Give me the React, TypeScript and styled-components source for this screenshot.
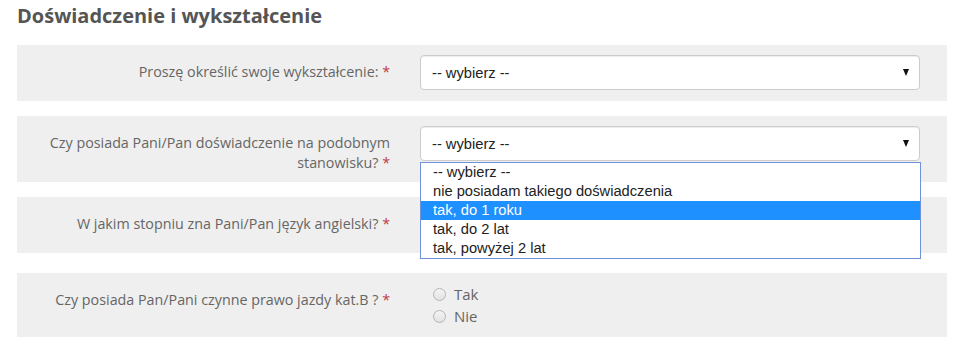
import React from "react";
import styled, { createGlobalStyle } from "styled-components";

const Global = createGlobalStyle`
  html, body { margin: 0; padding: 0; background: #fff; }
  body { font-family: "Open Sans", sans-serif; }
`;

const Page = styled.div`
  padding: 0 19px 0 17px;
  width: 930px;
`;

const Title = styled.h3`
  margin: 0;
  padding: 3px 0 0 0;
  height: 42px;
  font-family: "Open Sans", sans-serif;
  font-weight: 700;
  font-size: 20px;
  line-height: 26px;
  color: #555;
`;

const Row = styled.div<{ $h: number; $mb: number }>`
  display: grid;
  grid-template-columns: 388px 500px;
  column-gap: 15px;
  align-items: start;
  background: #efefef;
  height: ${(p) => p.$h}px;
  margin-bottom: ${(p) => p.$mb}px;
  box-sizing: border-box;
  padding-right: 27px;
`;

const Label = styled.label`
  text-align: right;
  padding-right: 15px;
  padding-top: 17px;
  font-size: 14.3px;
  line-height: 20px;
  color: #666;
`;

const Req = styled.span`
  color: #c0394b;
`;

const SelectBox = styled.div`
  position: relative;
  margin-top: 10px;
  height: 35px;
  box-sizing: border-box;
  border: 1px solid #ccc;
  border-radius: 4px;
  background: #fff;
  box-shadow: inset 0 1px 1px rgba(0, 0, 0, 0.075);
  display: flex;
  align-items: center;
  justify-content: space-between;
  padding: 0 10px 0 11px;
  font-family: "Liberation Sans", Arial, sans-serif;
  font-size: 14.7px;
  color: #222;
`;

const Arrow = styled.span`
  width: 0;
  height: 0;
  border-left: 3.5px solid transparent;
  border-right: 3.5px solid transparent;
  border-top: 7px solid #111;
`;

const Options = styled.ul`
  position: absolute;
  left: -1px;
  top: 35px;
  width: 501px;
  margin: 0;
  padding: 0;
  list-style: none;
  background: #fff;
  border: 1px solid #6f93d6;
  box-sizing: border-box;
  z-index: 10;
`;

const Option = styled.li<{ $active?: boolean }>`
  height: 19px;
  line-height: 19px;
  padding-left: 12px;
  font-family: "Liberation Sans", Arial, sans-serif;
  font-size: 14.7px;
  color: ${(p) => (p.$active ? "#fff" : "#222")};
  background: ${(p) => (p.$active ? "#1e90ff" : "transparent")};
`;

const Radios = styled.div`
  display: flex;
  flex-direction: column;
  padding-left: 13px;
  padding-top: 10px;
`;

const RadioLine = styled.label`
  display: flex;
  align-items: center;
  height: 22px;
  font-size: 15px;
  color: #666;
`;

const Circle = styled.span`
  width: 11px;
  height: 11px;
  border-radius: 50%;
  border: 1px solid #b5b5b5;
  background: linear-gradient(#f4f4f4, #e2e2e2);
  margin-right: 8px;
  box-sizing: content-box;
`;

const Select: React.FC<{ open?: boolean }> = ({ open }) => {
  const opts = [
    "-- wybierz --",
    "nie posiadam takiego doświadczenia",
    "tak, do 1 roku",
    "tak, do 2 lat",
    "tak, powyżej 2 lat",
  ];
  return (
    <SelectBox>
      <span>-- wybierz --</span>
      <Arrow />
      {open && (
        <Options>
          {opts.map((o, i) => (
            <Option key={o} $active={i === 2}>
              {o}
            </Option>
          ))}
        </Options>
      )}
    </SelectBox>
  );
};

export default function App() {
  return (
    <>
      <Global />
      <Page>
        <Title>Doświadczenie i wykształcenie</Title>
        <Row $h={56} $mb={15}>
          <Label>
            Proszę określić swoje wykształcenie: <Req>*</Req>
          </Label>
          <Select />
        </Row>
        <Row $h={66} $mb={15}>
          <Label>
            Czy posiada Pani/Pan doświadczenie na podobnym stanowisku? <Req>*</Req>
          </Label>
          <Select open />
        </Row>
        <Row $h={56} $mb={20}>
          <Label>
            W jakim stopniu zna Pani/Pan język angielski? <Req>*</Req>
          </Label>
          <div />
        </Row>
        <Row $h={64} $mb={0}>
          <Label>
            Czy posiada Pan/Pani czynne prawo jazdy kat.B ? <Req>*</Req>
          </Label>
          <Radios>
            <RadioLine>
              <Circle />
              Tak
            </RadioLine>
            <RadioLine>
              <Circle />
              Nie
            </RadioLine>
          </Radios>
        </Row>
      </Page>
    </>
  );
}
